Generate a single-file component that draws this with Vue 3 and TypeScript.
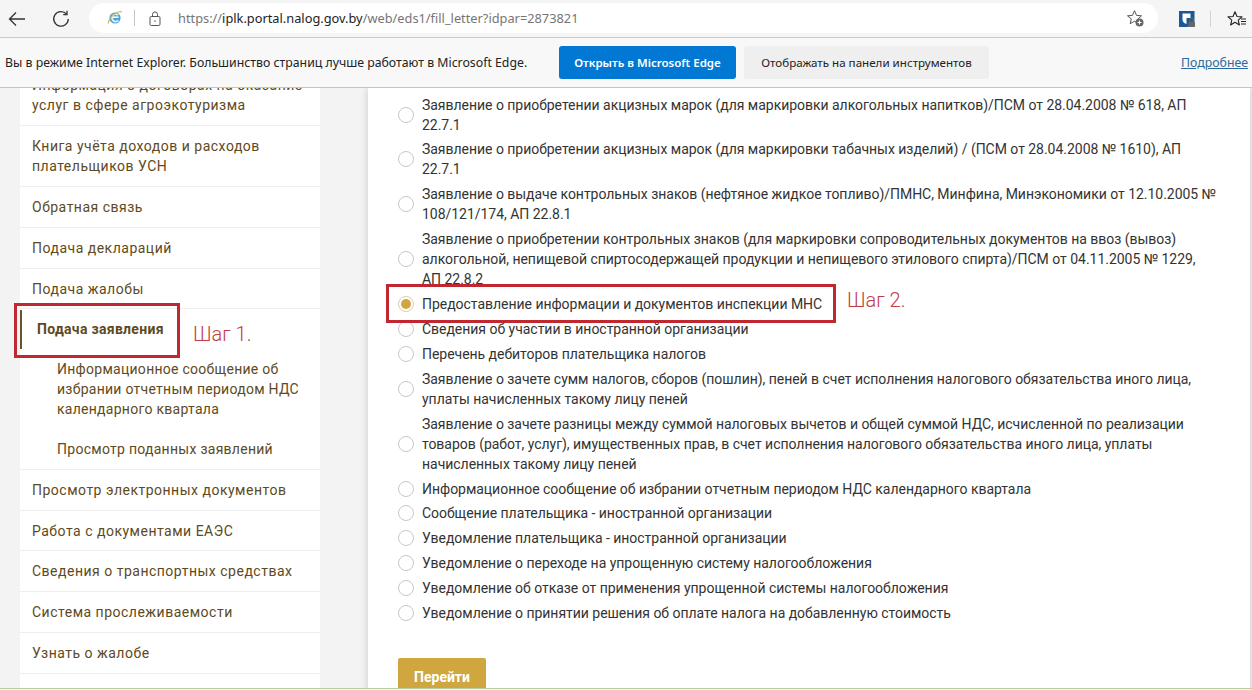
<script setup lang="ts">
interface NavItem { lines: string[]; sub?: boolean; active?: boolean; noBorder?: boolean }
const nav: NavItem[] = [
  { lines: ['Информация о договорах на оказание', 'услуг в сфере агроэкотуризма'] },
  { lines: ['Книга учёта доходов и расходов', 'плательщиков УСН'] },
  { lines: ['Обратная связь'] },
  { lines: ['Подача деклараций'] },
  { lines: ['Подача жалобы'] },
  { lines: ['Подача заявления'], active: true, noBorder: true },
  { lines: ['Информационное сообщение об', 'избрании отчетным периодом НДС', 'календарного квартала'], sub: true, noBorder: true },
  { lines: ['Просмотр поданных заявлений'], sub: true },
  { lines: ['Просмотр электронных документов'] },
  { lines: ['Работа с документами ЕАЭС'] },
  { lines: ['Сведения о транспортных средствах'] },
  { lines: ['Система прослеживаемости'] },
  { lines: ['Узнать о жалобе'] },
]
interface Opt { lines: string[]; checked?: boolean }
const options: Opt[] = [
  { lines: ['Заявление о приобретении акцизных марок (для маркировки алкогольных напитков)/ПСМ от 28.04.2008 № 618, АП', '22.7.1'] },
  { lines: ['Заявление о приобретении акцизных марок (для маркировки табачных изделий) / (ПСМ от 28.04.2008 № 1610), АП', '22.7.1'] },
  { lines: ['Заявление о выдаче контрольных знаков (нефтяное жидкое топливо)/ПМНС, Минфина, Минэкономики от 12.10.2005 №', '108/121/174, АП 22.8.1'] },
  { lines: ['Заявление о приобретении контрольных знаков (для маркировки сопроводительных документов на ввоз (вывоз)', 'алкогольной, непищевой спиртосодержащей продукции и непищевого этилового спирта)/ПСМ от 04.11.2005 № 1229,', 'АП 22.8.2'] },
  { lines: ['Предоставление информации и документов инспекции МНС'], checked: true },
  { lines: ['Сведения об участии в иностранной организации'] },
  { lines: ['Перечень дебиторов плательщика налогов'] },
  { lines: ['Заявление о зачете сумм налогов, сборов (пошлин), пеней в счет исполнения налогового обязательства иного лица,', 'уплаты начисленных такому лицу пеней'] },
  { lines: ['Заявление о зачете разницы между суммой налоговых вычетов и общей суммой НДС, исчисленной по реализации', 'товаров (работ, услуг), имущественных прав, в счет исполнения налогового обязательства иного лица, уплаты', 'начисленных такому лицу пеней'] },
  { lines: ['Информационное сообщение об избрании отчетным периодом НДС календарного квартала'] },
  { lines: ['Сообщение плательщика - иностранной организации'] },
  { lines: ['Уведомление плательщика - иностранной организации'] },
  { lines: ['Уведомление о переходе на упрощенную систему налогообложения'] },
  { lines: ['Уведомление об отказе от применения упрощенной системы налогообложения'] },
  { lines: ['Уведомление о принятии решения об оплате налога на добавленную стоимость'] },
]
</script>

<template>
  <div class="root">
    <header class="toolbar">
      <svg class="tb-back" width="18" height="16" viewBox="0 0 18 16" fill="none" stroke="#333" stroke-width="1.3">
        <path d="M17 8H1.5M8 1.5 1.5 8 8 14.5" />
      </svg>
      <svg class="tb-reload" width="18" height="18" viewBox="0 0 18 18" fill="none" stroke="#333" stroke-width="1.3">
        <path d="M14.6 4.2A7.3 7.3 0 1 0 16.3 9" />
        <path d="M15 .8v3.8h-3.8" />
      </svg>
      <div class="address">
        <svg class="ie" width="16" height="16" viewBox="0 0 16 16" fill="none">
          <circle cx="8" cy="8" r="5.6" fill="#4aa3d8" />
          <path d="M4.6 7.2h7" stroke="#fff" stroke-width="1.6" />
          <path d="M11 5.2a3.6 3.6 0 1 0 .2 5.2" stroke="#dff1fa" stroke-width="1.8" />
          <path d="M1.6 13.6C.4 11.8 5 5.2 9 3c2-1.1 5-2 5.6-.8" stroke="#d6b441" stroke-width="1.2" />
        </svg>
        <span class="addr-sep"></span>
        <svg class="lock" width="12" height="15" viewBox="0 0 12 15" fill="none" stroke="#555" stroke-width="1">
          <rect x="1" y="5.5" width="10" height="9" rx="1.2" />
          <path d="M3.5 5.5V3.4a2.5 2.5 0 0 1 5 0v2.1" />
          <circle cx="6" cy="10" r=".8" fill="#555" stroke="none" />
        </svg>
        <span class="url"><span class="dim">https://</span><span class="host">iplk.portal.nalog.gov.by</span><span class="dim">/web/eds1/fill_letter?idpar=2873821</span></span>
        <svg class="star-add" width="19" height="19" viewBox="0 0 19 19" fill="none">
          <path d="M8.5 1.6 10.5 6.4l5 .4-3.8 3.3 1 4.6-4.2-2.5-4.3 2.5 1.1-4.8L1.5 6.8l5-.4z" stroke="#555" stroke-width="1" stroke-linejoin="round" />
          <circle cx="13.5" cy="13.5" r="4" fill="#666" />
          <path d="M13.5 11.5v4M11.5 13.5h4" stroke="#fff" stroke-width="1.1" />
        </svg>
      </div>
      <svg class="shield" width="18" height="18" viewBox="0 0 18 18">
        <path d="M1 1h15.500v9.500c0 3.500-3 6-7.700 6.500H1z" fill="#1c5796" />
        <path d="M4.500 3.500H12.500V8H8.500v6C6 13.500 4.500 11.500 4.500 9.500z" fill="#fff" />
        <rect x="10.500" y="11.500" width="6.500" height="5.500" rx=".8" fill="#666" />
        <path d="M12 11.500V10a1.700 1.700 0 0 1 3.400 0v1.500" fill="none" stroke="#666" stroke-width="1" />
      </svg>
      <span class="tb-sep"></span>
      <svg class="favs" width="20" height="18" viewBox="0 0 20 18" fill="none" stroke="#222" stroke-width="1.1">
        <path d="M8 1.800 10 6.500l5 .4-3.800 3.200 1.200 4.900L8 12.300 3.600 15l1.200-4.900L1 6.900l5-.4z" stroke-linejoin="round" />
        <path d="M14 9h5M14 11.500h5M14 14h5" />
      </svg>
    </header>

    <div class="infobar">
      <span class="info-text">Вы в режиме Internet Explorer. Большинство страниц лучше работают в Microsoft Edge.</span>
      <button class="btn-open">Открыть в Microsoft Edge</button>
      <button class="btn-pin">Отображать на панели инструментов</button>
      <a class="more">Подробнее</a>
    </div>

    <div class="content">
      <nav class="sidebar">
        <div
          v-for="(item, i) in nav"
          :key="i"
          class="nav-item"
          :class="{ sub: item.sub, active: item.active, flat: item.noBorder }"
        >
          <span v-for="l in item.lines" :key="l" class="line">{{ l }}</span>
        </div>
      </nav>
      <main class="main">
        <label v-for="(o, i) in options" :key="i" class="opt">
          <span class="radio" :class="{ on: o.checked }"></span>
          <span class="opt-text"><span v-for="l in o.lines" :key="l" class="line">{{ l }}</span></span>
        </label>
        <button class="go">Перейти</button>
      </main>
    </div>

    <footer class="edge"></footer>

    <div class="mark mark-1"></div>
    <div class="mark mark-2"></div>
    <span class="step step-1">Шаг 1.</span>
    <span class="step step-2">Шаг 2.</span>
  </div>
</template>

<style>
html, body { margin: 0; background: #fff; }
</style>

<style scoped>
.root {
  position: relative;
  width: 1252px;
  height: 690px;
  overflow: hidden;
  display: flex;
  flex-direction: column;
  background: #f3f3f3;
  font-family: Roboto, "Liberation Sans", sans-serif;
}
.toolbar {
  flex: 0 0 38px;
  height: 38px;
  box-sizing: border-box;
  display: flex;
  align-items: center;
  background: #f5f5f5;
  border-bottom: 1px solid #c9c9c9;
}
.tb-back { margin-left: 8px; }
.tb-reload { margin-left: 26px; }
.address {
  margin-left: 19px;
  width: 1069px;
  height: 30px;
  border-radius: 15px;
  background: #fff;
  display: flex;
  align-items: center;
  box-sizing: border-box;
  padding-left: 18px;
  margin-top: -1px;
}
.addr-sep { width: 1px; height: 16px; background: #c4c4c4; margin-left: 11px; }
.lock { margin-left: 14px; }
.url {
  margin-left: 17px;
  font-family: "Noto Sans", sans-serif;
  font-size: 12.8px;
  white-space: nowrap;
  flex: 1;
}
.dim { color: #767676; }
.host { color: #222; }
.star-add { margin-right: 13px; }
.shield { margin-left: 20px; }
.tb-sep { width: 1px; height: 16px; background: #d4d4d4; margin-left: 14px; }
.favs { margin-left: 16px; }
.infobar {
  flex: 0 0 50px;
  height: 50px;
  box-sizing: border-box;
  display: flex;
  align-items: center;
  background: #f8f8f8;
  border-bottom: 1px solid #c4c4c4;
  font-family: "Noto Sans", sans-serif;
  font-size: 12.3px;
  color: #222;
  padding-bottom: 1px;
}
.info-text { margin-left: 5px; width: 554px; white-space: nowrap; }
.btn-open, .btn-pin {
  height: 33px;
  border: 0;
  border-radius: 3px;
  font-family: "Noto Sans", sans-serif;
  font-size: 11.5px;
  padding: 0;
  white-space: nowrap;
}
.btn-open { width: 177px; background: #0078d4; color: #fff; font-weight: 600; }
.btn-pin { width: 245px; margin-left: 8px; background: #efefef; color: #222; font-size: 11.6px; }
.more { margin-left: auto; margin-right: 4px; color: #2a6a9e; text-decoration: underline; }
.content {
  flex: 1;
  min-height: 0;
  overflow: hidden;
  display: flex;
  align-items: flex-start;
}
.sidebar {
  flex: 0 0 300px;
  margin-left: 20px;
  margin-top: -22.6px;
  padding-bottom: 40px;
  background: #fff;
  color: #5e4a22;
  font-size: 14px;
  line-height: 20px;
  letter-spacing: .5px;
}
.line { display: block; white-space: nowrap; }
.nav-item {
  box-sizing: border-box;
  padding: 10px 12px 9.8px;
  border-bottom: 1px solid #eee;
}
.nav-item.flat { border-bottom: 0; }
.nav-item.sub { padding-left: 37px; letter-spacing: .27px; }
.nav-item.active {
  position: relative;
  padding-left: 17px;
  font-weight: 700;
  letter-spacing: .3px;
}
.nav-item.active::before {
  content: "";
  position: absolute;
  left: 0;
  top: 1px;
  bottom: 0;
  width: 2px;
  background: #6a5327;
}
.main {
  flex: 0 0 882px;
  box-sizing: border-box;
  margin-left: 48px;
  height: 640px;
  padding: 6.5px 0 0 30px;
  background: #fff;
  box-shadow: -2px 0 6px rgba(0, 0, 0, .1), 2px 0 3px rgba(0, 0, 0, .08);
  color: #333;
  font-size: 14px;
  line-height: 20px;
  letter-spacing: -.03px;
}
.opt {
  display: flex;
  align-items: center;
  margin-bottom: 4.9px;
}
.radio {
  flex: 0 0 auto;
  box-sizing: border-box;
  width: 16px;
  height: 16px;
  border-radius: 50%;
  border: 1px solid #c8c8c8;
  background: #fff;
  margin-right: 8px;
  display: flex;
  align-items: center;
  justify-content: center;
}
.radio.on { border-color: #d8cfae; }
.radio.on::after {
  content: "";
  width: 10px;
  height: 10px;
  border-radius: 50%;
  background: #d1a640;
}
.go {
  display: block;
  width: 88px;
  height: 38px;
  margin-top: 34.7px;
  border: 0;
  border-radius: 2px;
  background: #d0a73f;
  color: #fff;
  font-family: Roboto, sans-serif;
  font-size: 14px;
  font-weight: 700;
}
.edge {
  position: absolute;
  left: 0;
  right: 0;
  bottom: 0;
  height: 2px;
  box-sizing: border-box;
  background: #f4f6ee;
  border-top: 1px solid #b8cc9c;
}
.mark {
  position: absolute;
  box-sizing: border-box;
  border: 3px solid #c0272f;
}
.mark-1 { left: 14px; top: 303px; width: 166px; height: 55px; }
.mark-2 { left: 386px; top: 284px; width: 450px; height: 39px; }
.step {
  position: absolute;
  color: #c23a48;
  font-size: 20px;
  font-weight: 300;
  line-height: 24px;
  white-space: nowrap;
}
.step-1 { left: 193px; top: 322px; }
.step-2 { left: 847px; top: 288px; }
</style>
